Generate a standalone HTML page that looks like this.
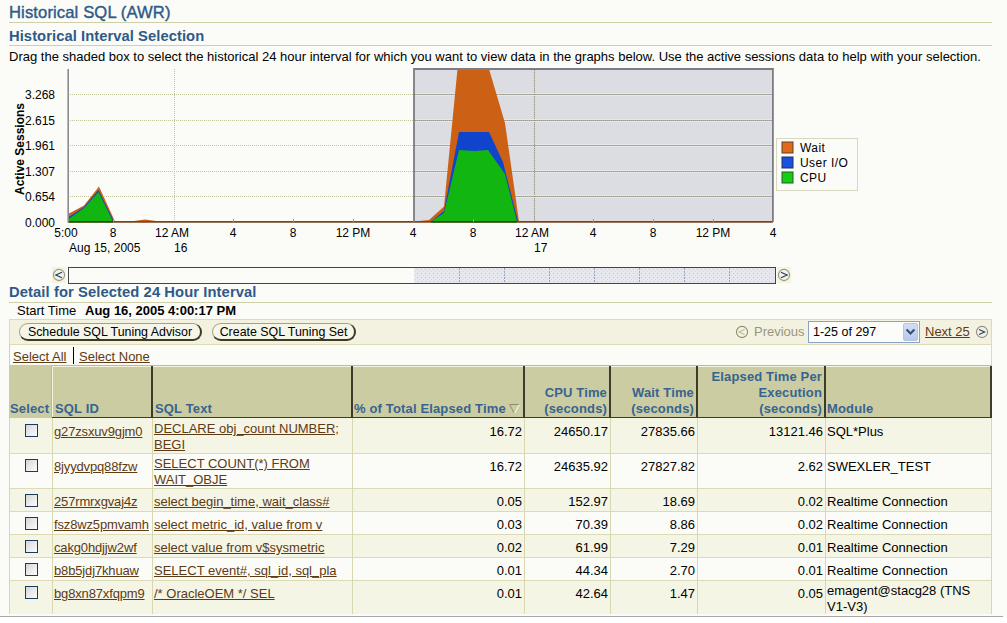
<!DOCTYPE html>
<html><head><meta charset="utf-8">
<style>
html,body{margin:0;padding:0;}
body{width:1007px;height:623px;overflow:hidden;background:#fbfcf7;font-family:"Liberation Sans",sans-serif;color:#000;position:relative;}
.t{position:absolute;white-space:nowrap;line-height:20px;}
.r{position:absolute;}
.lnk{text-decoration:underline;text-underline-offset:1px;}
.btn{position:absolute;height:18px;box-sizing:border-box;padding-top:1px;border:1px solid #a3a285;border-right:2px solid #3c3b22;border-bottom:2px solid #3c3b22;border-radius:9px;background:#f6f6e8;font-size:12.4px;line-height:15px;text-align:center;white-space:nowrap;color:#000;}
.cb{position:absolute;width:13px;height:13px;box-sizing:border-box;border:1px solid #1c3a5a;background:linear-gradient(135deg,#d4d4d8 0%,#e8e8ea 45%,#fbfbfb 100%);}
</style></head>
<body>
<div class="t" style="top:3px;font-size:16.6px;color:#2e5a88;left:9px;-webkit-text-stroke:0.4px #2e5a88;letter-spacing:0.12px;">Historical SQL (AWR)</div>
<div class="r" style="left:9px;top:22px;width:983px;height:1px;background:#cfcfa8;"></div>
<div class="t" style="top:26px;font-size:14.75px;font-weight:bold;color:#2e5a88;left:9px;letter-spacing:0.06px;">Historical Interval Selection</div>
<div class="r" style="left:9px;top:45px;width:983px;height:1px;background:#cfcfa8;"></div>
<div class="t" style="top:47px;font-size:13px;left:9px;">Drag the shaded box to select the historical 24 hour interval for which you want to view data in the graphs below. Use the active sessions data to help with your selection.</div>
<svg class="r" style="left:0;top:0" width="1007" height="292" viewBox="0 0 1007 292" font-family="Liberation Sans" font-size="12">
  <defs>
    <pattern id="thumb" x="0" y="0" width="4" height="4" patternUnits="userSpaceOnUse">
      <rect width="4" height="4" fill="#e6e8ee"/>
      <rect x="1" y="1" width="1" height="1" fill="#c9ccd4"/>
      <rect x="3" y="3" width="1" height="1" fill="#d6d8de"/>
    </pattern>
  </defs>
  <!-- selection shade -->
  <rect x="414" y="69" width="359" height="152" fill="#dcdce3"/>
  <!-- grid -->
  <g stroke="#c4c49c" stroke-width="1" stroke-dasharray="1,1">
    <line x1="68" y1="94.5" x2="773" y2="94.5"/>
    <line x1="68" y1="120.5" x2="773" y2="120.5"/>
    <line x1="68" y1="145.5" x2="773" y2="145.5"/>
    <line x1="68" y1="171.5" x2="773" y2="171.5"/>
    <line x1="68" y1="196.5" x2="773" y2="196.5"/>
    <line x1="174.5" y1="69" x2="174.5" y2="221"/>
    <line x1="534.5" y1="69" x2="534.5" y2="221"/>
  </g>
  <g>
    <rect x="415" y="93" width="357" height="3" fill="#e5e7ea"/>
    <rect x="415" y="119" width="357" height="3" fill="#e5e7ea"/>
    <rect x="415" y="144" width="357" height="3" fill="#e5e7ea"/>
    <rect x="415" y="170" width="357" height="3" fill="#e5e7ea"/>
    <rect x="415" y="195" width="357" height="3" fill="#e5e7ea"/>
  </g>
  <g stroke="#b4b4a6" stroke-width="1">
    <line x1="415" y1="94.5" x2="772" y2="94.5"/>
    <line x1="415" y1="120.5" x2="772" y2="120.5"/>
    <line x1="415" y1="145.5" x2="772" y2="145.5"/>
    <line x1="415" y1="171.5" x2="772" y2="171.5"/>
    <line x1="415" y1="196.5" x2="772" y2="196.5"/>
  </g>
  <g stroke="#9a9a88" stroke-width="1" stroke-dasharray="1,1">
    <line x1="415" y1="94.5" x2="772" y2="94.5"/>
    <line x1="415" y1="120.5" x2="772" y2="120.5"/>
    <line x1="415" y1="145.5" x2="772" y2="145.5"/>
    <line x1="415" y1="171.5" x2="772" y2="171.5"/>
    <line x1="415" y1="196.5" x2="772" y2="196.5"/>
    <line x1="534.5" y1="70" x2="534.5" y2="221"/>
  </g>
  <!-- data -->
  <polygon fill="#cc6116" points="68,221.5 68,214 84,205.5 99,186.5 115,221.5 130,221.5 145,219.5 160,221.5 414,221.5 429,220 444,206.5 457.5,69 489,69 505,123 519,221.5"/>
  <polygon fill="#1144cc" points="68,221.5 68,217.5 84,207 98.5,190 114,221.5 414,221.5 431,221.5 444,211 459,132 489,132 503,162 518,221.5"/>
  <polygon fill="#11b611" points="68,221.5 68,219.5 84,208 98.5,192 113,221.5 414,221.5 431,221.5 444,213 459,150 475,151 488,150 505,174 517,221.5"/>
  <line x1="68" y1="221.8" x2="773" y2="221.8" stroke="#7a4420" stroke-width="1.7"/>
  <line x1="431" y1="221.8" x2="517" y2="221.8" stroke="#0a5a0a" stroke-width="1.6"/>
  <line x1="68" y1="221.8" x2="113" y2="221.8" stroke="#0a5a0a" stroke-width="1.6"/>
  <!-- ticks -->
  <g stroke="#9a9a90" stroke-width="1">
    <line x1="233.5" y1="219" x2="233.5" y2="222"/>
    <line x1="293.5" y1="219" x2="293.5" y2="222"/>
    <line x1="353.5" y1="219" x2="353.5" y2="222"/>
    <line x1="113.5" y1="219" x2="113.5" y2="222"/>
    <line x1="473.5" y1="219" x2="473.5" y2="222"/>
    <line x1="593.5" y1="219" x2="593.5" y2="222"/>
    <line x1="653.5" y1="219" x2="653.5" y2="222"/>
    <line x1="713.5" y1="219" x2="713.5" y2="222"/>
  </g>
  <!-- selection border -->
  <path d="M414,222 V69 H772.9 V222" fill="none" stroke="#7c7c82" stroke-width="1.8"/>
  <!-- axes -->
  <line x1="68.2" y1="69" x2="68.2" y2="222.5" stroke="#8a8a90" stroke-width="1.6"/>
  <!-- y labels -->
  <g text-anchor="end" fill="#000">
    <text x="55" y="99">3.268</text>
    <text x="55" y="125">2.615</text>
    <text x="55" y="150">1.961</text>
    <text x="55" y="176">1.307</text>
    <text x="55" y="201">0.654</text>
    <text x="55" y="227">0.000</text>
  </g>
  <text transform="translate(24,149) rotate(-90)" text-anchor="middle" font-weight="bold">Active Sessions</text>
  <!-- x labels -->
  <g text-anchor="middle">
    <text x="66" y="237">5:00</text>
    <text x="113" y="237">8</text>
    <text x="172" y="237">12 AM</text>
    <text x="233" y="237">4</text>
    <text x="293" y="237">8</text>
    <text x="353" y="237">12 PM</text>
    <text x="413" y="237">4</text>
    <text x="473" y="237">8</text>
    <text x="532" y="237">12 AM</text>
    <text x="593" y="237">4</text>
    <text x="653" y="237">8</text>
    <text x="713" y="237">12 PM</text>
    <text x="773" y="237">4</text>
  </g>
  <text x="69" y="252">Aug 15, 2005</text>
  <text x="174" y="252">16</text>
  <text x="534" y="252">17</text>
  <!-- legend -->
  <rect x="776.5" y="138.5" width="81" height="52" fill="#fbfcf7" stroke="#d8d8c0"/>
  <rect x="782" y="142" width="11" height="11" fill="#e06a1a" stroke="#604030"/>
  <rect x="782" y="157" width="11" height="11" fill="#1a4fe0" stroke="#203060"/>
  <rect x="782" y="172" width="11" height="11" fill="#17cc17" stroke="#206020"/>
  <g letter-spacing="0.45">
  <text x="800" y="152">Wait</text>
  <text x="800" y="167">User I/O</text>
  <text x="800" y="182">CPU</text>
  </g>
  <!-- scrollbar -->
  <rect x="52" y="267" width="14" height="16" fill="#f3f2e4"/>
  <circle cx="59" cy="275" r="5.6" fill="none" stroke="#9d9a7e" stroke-width="1.1"/>
  <path d="M62,272.3 L55.8,275 L62,277.7" fill="none" stroke="#1f3f6a" stroke-width="1.1"/>
  <rect x="68.5" y="267.5" width="707" height="16" fill="#fbfcf7" stroke="#444"/>
  <rect x="414" y="268" width="361" height="15" fill="url(#thumb)"/>
  <g stroke="#9aa6c0" stroke-width="1" stroke-dasharray="2,1">
    <line x1="459.5" y1="268" x2="459.5" y2="283"/>
    <line x1="504.5" y1="268" x2="504.5" y2="283"/>
    <line x1="549.5" y1="268" x2="549.5" y2="283"/>
    <line x1="594.5" y1="268" x2="594.5" y2="283"/>
    <line x1="639.5" y1="268" x2="639.5" y2="283"/>
    <line x1="684.5" y1="268" x2="684.5" y2="283"/>
    <line x1="729.5" y1="268" x2="729.5" y2="283"/>
  </g>
  <rect x="777" y="267" width="14" height="16" fill="#f3f2e4"/>
  <circle cx="784" cy="275" r="5.6" fill="none" stroke="#9d9a7e" stroke-width="1.1"/>
  <path d="M781,272.3 L787.2,275 L781,277.7" fill="none" stroke="#1f3f6a" stroke-width="1.1"/>
</svg>

<div class="t" style="top:282px;font-size:14.75px;font-weight:bold;color:#2e5a88;left:9px;letter-spacing:0.09px;">Detail for Selected 24 Hour Interval</div>
<div class="r" style="left:9px;top:302px;width:983px;height:1px;background:#cfcfa8;"></div>
<div class="t" style="top:301px;font-size:13px;left:17px;">Start Time</div>
<div class="t" style="top:301px;font-size:13px;font-weight:bold;left:85px;">Aug 16, 2005 4:00:17 PM</div>
<div class="r" style="left:9px;top:319px;width:983px;height:26px;background:#f3f2e1;box-sizing:border-box;border:1px solid #dcdab8;"></div>
<div class="btn" style="left:19px;top:323px;width:183px;">Schedule SQL Tuning Advisor</div>
<div class="btn" style="left:212px;top:323px;width:144px;">Create SQL Tuning Set</div>
<svg class="r" style="left:735px;top:325px" width="14" height="14"><circle cx="7" cy="7" r="5.6" fill="none" stroke="#8e8d70" stroke-width="1.1"/><path d="M9.5,4.6 L4,7 L9.5,9.4" fill="none" stroke="#bcbb90" stroke-width="1.1"/></svg>
<div class="t" style="left:754px;top:322px;font-size:13px;color:#98967c;">Previous</div>
<div class="r" style="left:808px;top:321px;width:112px;height:22px;box-sizing:border-box;border:1px solid #8aa3c4;background:#fcfdfa;"></div>
<div class="t" style="left:813px;top:322px;font-size:12.5px;color:#000;">1-25 of 297</div>
<div class="r" style="left:903px;top:323px;width:15px;height:18px;box-sizing:border-box;border:1px solid #b5c5e2;border-radius:2px;background:linear-gradient(180deg,#d3def3,#b8c9ea);"></div>
<svg class="r" style="left:903px;top:323px" width="15" height="18"><path d="M3.6,6.6 L7.5,10.6 L11.4,6.6" fill="none" stroke="#34507a" stroke-width="2.1"/></svg>
<div class="t" style="left:925px;top:322px;font-size:13px;color:#5e3b14;"><span class="lnk">Next 25</span></div>
<svg class="r" style="left:975px;top:325px" width="14" height="14"><circle cx="7" cy="7" r="5.6" fill="none" stroke="#8f9284" stroke-width="1.1"/><path d="M4,4.6 L9.6,7 L4,9.4" fill="none" stroke="#1f3f6a" stroke-width="1.1"/></svg>

<div class="r" style="left:9px;top:345px;width:983px;height:20px;background:#fbfcf7;box-sizing:border-box;border-left:1px solid #d4d3ad;border-right:1px solid #d8d8d0;"></div>
<div class="t" style="top:347px;font-size:13px;color:#5e3b14;left:13px;"><span class="lnk">Select All</span></div>
<div class="r" style="left:73px;top:347px;width:1px;height:17px;background:#000;"></div>
<div class="t" style="top:347px;font-size:13px;color:#5e3b14;left:79px;"><span class="lnk">Select None</span></div>
<div class="r" style="left:9px;top:365px;width:983px;height:53px;background:#cccca3;"></div>
<div class="r" style="left:51px;top:365px;width:101px;height:1px;background:#b9b9a8;"></div>
<div class="r" style="left:51px;top:365px;width:1px;height:53px;background:#b9b9a8;"></div>
<div class="r" style="left:52px;top:366px;width:100px;height:1px;background:#f4f3dc;"></div>
<div class="r" style="left:52px;top:366px;width:1px;height:52px;background:#f4f3dc;"></div>
<div class="r" style="left:151px;top:365px;width:201px;height:1px;background:#b9b9a8;"></div>
<div class="r" style="left:151px;top:365px;width:1px;height:53px;background:#b9b9a8;"></div>
<div class="r" style="left:152px;top:366px;width:200px;height:1px;background:#f4f3dc;"></div>
<div class="r" style="left:152px;top:366px;width:1px;height:52px;background:#f4f3dc;"></div>
<div class="r" style="left:351px;top:365px;width:173px;height:1px;background:#b9b9a8;"></div>
<div class="r" style="left:351px;top:365px;width:1px;height:53px;background:#b9b9a8;"></div>
<div class="r" style="left:352px;top:366px;width:172px;height:1px;background:#f4f3dc;"></div>
<div class="r" style="left:352px;top:366px;width:1px;height:52px;background:#f4f3dc;"></div>
<div class="r" style="left:523px;top:365px;width:87px;height:1px;background:#b9b9a8;"></div>
<div class="r" style="left:523px;top:365px;width:1px;height:53px;background:#b9b9a8;"></div>
<div class="r" style="left:524px;top:366px;width:86px;height:1px;background:#f4f3dc;"></div>
<div class="r" style="left:524px;top:366px;width:1px;height:52px;background:#f4f3dc;"></div>
<div class="r" style="left:609px;top:365px;width:88px;height:1px;background:#b9b9a8;"></div>
<div class="r" style="left:609px;top:365px;width:1px;height:53px;background:#b9b9a8;"></div>
<div class="r" style="left:610px;top:366px;width:87px;height:1px;background:#f4f3dc;"></div>
<div class="r" style="left:610px;top:366px;width:1px;height:52px;background:#f4f3dc;"></div>
<div class="r" style="left:696px;top:365px;width:129px;height:1px;background:#b9b9a8;"></div>
<div class="r" style="left:696px;top:365px;width:1px;height:53px;background:#b9b9a8;"></div>
<div class="r" style="left:697px;top:366px;width:128px;height:1px;background:#f4f3dc;"></div>
<div class="r" style="left:697px;top:366px;width:1px;height:52px;background:#f4f3dc;"></div>
<div class="r" style="left:824px;top:365px;width:167px;height:1px;background:#b9b9a8;"></div>
<div class="r" style="left:824px;top:365px;width:1px;height:53px;background:#b9b9a8;"></div>
<div class="r" style="left:825px;top:366px;width:166px;height:1px;background:#f4f3dc;"></div>
<div class="r" style="left:825px;top:366px;width:1px;height:52px;background:#f4f3dc;"></div>
<div class="r" style="left:151px;top:366px;width:2px;height:52px;background:#3d3b2a;"></div>
<div class="r" style="left:52px;top:417px;width:101px;height:1px;background:#3d3b2a;"></div>
<div class="r" style="left:351px;top:366px;width:2px;height:52px;background:#3d3b2a;"></div>
<div class="r" style="left:152px;top:417px;width:201px;height:1px;background:#3d3b2a;"></div>
<div class="r" style="left:523px;top:366px;width:2px;height:52px;background:#3d3b2a;"></div>
<div class="r" style="left:352px;top:417px;width:173px;height:1px;background:#3d3b2a;"></div>
<div class="r" style="left:609px;top:366px;width:2px;height:52px;background:#3d3b2a;"></div>
<div class="r" style="left:524px;top:417px;width:87px;height:1px;background:#3d3b2a;"></div>
<div class="r" style="left:696px;top:366px;width:2px;height:52px;background:#3d3b2a;"></div>
<div class="r" style="left:610px;top:417px;width:88px;height:1px;background:#3d3b2a;"></div>
<div class="r" style="left:824px;top:366px;width:2px;height:52px;background:#3d3b2a;"></div>
<div class="r" style="left:697px;top:417px;width:129px;height:1px;background:#3d3b2a;"></div>
<div class="r" style="left:990px;top:366px;width:2px;height:52px;background:#3d3b2a;"></div>
<div class="r" style="left:825px;top:417px;width:167px;height:1px;background:#3d3b2a;"></div>
<div class="t" style="top:399px;font-size:13px;font-weight:bold;color:#37648f;left:10px;letter-spacing:0.15px;">Select</div>
<div class="t" style="top:399px;font-size:13px;font-weight:bold;color:#37648f;left:55px;letter-spacing:0.15px;">SQL ID</div>
<div class="t" style="top:399px;font-size:13px;font-weight:bold;color:#37648f;left:155px;letter-spacing:0.15px;">SQL Text</div>
<div class="t" style="top:399px;font-size:13px;font-weight:bold;color:#37648f;left:354px;letter-spacing:0.15px;">% of Total Elapsed Time</div>
<svg class="r" style="left:508px;top:403px" width="13" height="12"><path d="M1.5,1.5 H11.5 L6.5,10.5 Z" fill="none" stroke="#8d8c6c" stroke-width="1"/><path d="M11.5,1.5 L6.5,10.5" stroke="#fbfbef" stroke-width="1.2"/></svg>
<div class="t" style="top:383px;font-size:13px;font-weight:bold;color:#37648f;right:400px;text-align:right;letter-spacing:0.15px;">CPU Time</div>
<div class="t" style="top:399px;font-size:13px;font-weight:bold;color:#37648f;right:400px;text-align:right;letter-spacing:0.15px;">(seconds)</div>
<div class="t" style="top:383px;font-size:13px;font-weight:bold;color:#37648f;right:313px;text-align:right;letter-spacing:0.15px;">Wait Time</div>
<div class="t" style="top:399px;font-size:13px;font-weight:bold;color:#37648f;right:313px;text-align:right;letter-spacing:0.15px;">(seconds)</div>
<div class="t" style="top:367px;font-size:13px;font-weight:bold;color:#37648f;right:185px;text-align:right;letter-spacing:0.15px;">Elapsed Time Per</div>
<div class="t" style="top:383px;font-size:13px;font-weight:bold;color:#37648f;right:185px;text-align:right;letter-spacing:0.15px;">Execution</div>
<div class="t" style="top:399px;font-size:13px;font-weight:bold;color:#37648f;right:185px;text-align:right;letter-spacing:0.15px;">(seconds)</div>
<div class="t" style="top:399px;font-size:13px;font-weight:bold;color:#37648f;left:827px;letter-spacing:0.15px;">Module</div>
<div class="r" style="left:9px;top:418px;width:983px;height:35px;background:#f5f5e5;"></div>
<div class="cb" style="left:25px;top:424px"></div>
<div class="t" style="top:422px;font-size:13px;color:#5e3b14;left:54px;letter-spacing:-0.15px;"><span class="lnk">g27zsxuv9gjm0</span></div>
<div class="t" style="top:419px;font-size:13px;color:#5e3b14;left:154px;"><span class="lnk">DECLARE obj_count NUMBER;</span></div>
<div class="t" style="top:435px;font-size:13px;color:#5e3b14;left:154px;"><span class="lnk">BEGI</span></div>
<div class="t" style="top:422px;font-size:13px;right:485px;text-align:right;">16.72</div>
<div class="t" style="top:422px;font-size:13px;right:399px;text-align:right;">24650.17</div>
<div class="t" style="top:422px;font-size:13px;right:312px;text-align:right;">27835.66</div>
<div class="t" style="top:422px;font-size:13px;right:184px;text-align:right;">13121.46</div>
<div class="t" style="top:422px;font-size:13px;left:827px;">SQL*Plus</div>
<div class="r" style="left:9px;top:453px;width:983px;height:35px;background:#fbfcf7;"></div>
<div class="cb" style="left:25px;top:459px"></div>
<div class="t" style="top:457px;font-size:13px;color:#5e3b14;left:54px;letter-spacing:-0.15px;"><span class="lnk">8jyydvpq88fzw</span></div>
<div class="t" style="top:454px;font-size:13px;color:#5e3b14;left:154px;"><span class="lnk">SELECT COUNT(*) FROM</span></div>
<div class="t" style="top:470px;font-size:13px;color:#5e3b14;left:154px;"><span class="lnk">WAIT_OBJE</span></div>
<div class="t" style="top:457px;font-size:13px;right:485px;text-align:right;">16.72</div>
<div class="t" style="top:457px;font-size:13px;right:399px;text-align:right;">24635.92</div>
<div class="t" style="top:457px;font-size:13px;right:312px;text-align:right;">27827.82</div>
<div class="t" style="top:457px;font-size:13px;right:184px;text-align:right;">2.62</div>
<div class="t" style="top:457px;font-size:13px;left:827px;">SWEXLER_TEST</div>
<div class="r" style="left:9px;top:488px;width:983px;height:23px;background:#f5f5e5;"></div>
<div class="cb" style="left:25px;top:494px"></div>
<div class="t" style="top:492px;font-size:13px;color:#5e3b14;left:54px;letter-spacing:-0.15px;"><span class="lnk">257rmrxgvaj4z</span></div>
<div class="t" style="top:492px;font-size:13px;color:#5e3b14;left:154px;"><span class="lnk">select begin_time, wait_class#</span></div>
<div class="t" style="top:492px;font-size:13px;right:485px;text-align:right;">0.05</div>
<div class="t" style="top:492px;font-size:13px;right:399px;text-align:right;">152.97</div>
<div class="t" style="top:492px;font-size:13px;right:312px;text-align:right;">18.69</div>
<div class="t" style="top:492px;font-size:13px;right:184px;text-align:right;">0.02</div>
<div class="t" style="top:492px;font-size:13px;left:827px;">Realtime Connection</div>
<div class="r" style="left:9px;top:511px;width:983px;height:23px;background:#fbfcf7;"></div>
<div class="cb" style="left:25px;top:517px"></div>
<div class="t" style="top:515px;font-size:13px;color:#5e3b14;left:54px;letter-spacing:-0.15px;"><span class="lnk">fsz8wz5pmvamh</span></div>
<div class="t" style="top:515px;font-size:13px;color:#5e3b14;left:154px;"><span class="lnk">select metric_id, value from v</span></div>
<div class="t" style="top:515px;font-size:13px;right:485px;text-align:right;">0.03</div>
<div class="t" style="top:515px;font-size:13px;right:399px;text-align:right;">70.39</div>
<div class="t" style="top:515px;font-size:13px;right:312px;text-align:right;">8.86</div>
<div class="t" style="top:515px;font-size:13px;right:184px;text-align:right;">0.02</div>
<div class="t" style="top:515px;font-size:13px;left:827px;">Realtime Connection</div>
<div class="r" style="left:9px;top:534px;width:983px;height:23px;background:#f5f5e5;"></div>
<div class="cb" style="left:25px;top:540px"></div>
<div class="t" style="top:538px;font-size:13px;color:#5e3b14;left:54px;letter-spacing:-0.15px;"><span class="lnk">cakg0hdjjw2wf</span></div>
<div class="t" style="top:538px;font-size:13px;color:#5e3b14;left:154px;"><span class="lnk">select value from v$sysmetric</span></div>
<div class="t" style="top:538px;font-size:13px;right:485px;text-align:right;">0.02</div>
<div class="t" style="top:538px;font-size:13px;right:399px;text-align:right;">61.99</div>
<div class="t" style="top:538px;font-size:13px;right:312px;text-align:right;">7.29</div>
<div class="t" style="top:538px;font-size:13px;right:184px;text-align:right;">0.01</div>
<div class="t" style="top:538px;font-size:13px;left:827px;">Realtime Connection</div>
<div class="r" style="left:9px;top:557px;width:983px;height:23px;background:#fbfcf7;"></div>
<div class="cb" style="left:25px;top:563px"></div>
<div class="t" style="top:561px;font-size:13px;color:#5e3b14;left:54px;letter-spacing:-0.15px;"><span class="lnk">b8b5jdj7khuaw</span></div>
<div class="t" style="top:561px;font-size:13px;color:#5e3b14;left:154px;"><span class="lnk">SELECT event#, sql_id, sql_pla</span></div>
<div class="t" style="top:561px;font-size:13px;right:485px;text-align:right;">0.01</div>
<div class="t" style="top:561px;font-size:13px;right:399px;text-align:right;">44.34</div>
<div class="t" style="top:561px;font-size:13px;right:312px;text-align:right;">2.70</div>
<div class="t" style="top:561px;font-size:13px;right:184px;text-align:right;">0.01</div>
<div class="t" style="top:561px;font-size:13px;left:827px;">Realtime Connection</div>
<div class="r" style="left:9px;top:580px;width:983px;height:34px;background:#f5f5e5;"></div>
<div class="cb" style="left:25px;top:586px"></div>
<div class="t" style="top:584px;font-size:13px;color:#5e3b14;left:54px;letter-spacing:-0.15px;"><span class="lnk">bg8xn87xfqpm9</span></div>
<div class="t" style="top:584px;font-size:13px;color:#5e3b14;left:154px;"><span class="lnk">/* OracleOEM */ SEL</span></div>
<div class="t" style="top:584px;font-size:13px;right:485px;text-align:right;">0.01</div>
<div class="t" style="top:584px;font-size:13px;right:399px;text-align:right;">42.64</div>
<div class="t" style="top:584px;font-size:13px;right:312px;text-align:right;">1.47</div>
<div class="t" style="top:584px;font-size:13px;right:184px;text-align:right;">0.05</div>
<div class="t" style="top:581px;font-size:13px;left:827px;">emagent@stacg28 (TNS</div>
<div class="t" style="top:597px;font-size:13px;left:827px;">V1-V3)</div>
<div class="r" style="left:9px;top:453px;width:983px;height:1px;background:#dcdbb6;"></div>
<div class="r" style="left:9px;top:488px;width:983px;height:1px;background:#dcdbb6;"></div>
<div class="r" style="left:9px;top:511px;width:983px;height:1px;background:#dcdbb6;"></div>
<div class="r" style="left:9px;top:534px;width:983px;height:1px;background:#dcdbb6;"></div>
<div class="r" style="left:9px;top:557px;width:983px;height:1px;background:#dcdbb6;"></div>
<div class="r" style="left:9px;top:580px;width:983px;height:1px;background:#dcdbb6;"></div>
<div class="r" style="left:9px;top:418px;width:1px;height:196px;background:#d8d7b0;"></div>
<div class="r" style="left:52px;top:418px;width:1px;height:196px;background:#d8d7b0;"></div>
<div class="r" style="left:152px;top:418px;width:1px;height:196px;background:#d8d7b0;"></div>
<div class="r" style="left:352px;top:418px;width:1px;height:196px;background:#d8d7b0;"></div>
<div class="r" style="left:524px;top:418px;width:1px;height:196px;background:#d8d7b0;"></div>
<div class="r" style="left:610px;top:418px;width:1px;height:196px;background:#d8d7b0;"></div>
<div class="r" style="left:697px;top:418px;width:1px;height:196px;background:#d8d7b0;"></div>
<div class="r" style="left:825px;top:418px;width:1px;height:196px;background:#d8d7b0;"></div>
<div class="r" style="left:991px;top:418px;width:1px;height:196px;background:#d8d7b0;"></div>
<div class="r" style="left:0px;top:614px;width:1007px;height:9px;background:#fbfcf7;"></div>
<div class="r" style="left:0px;top:616px;width:1003px;height:1px;background:#a8a8a8;"></div>
<div class="r" style="left:0px;top:617px;width:1007px;height:6px;background:#ffffff;"></div>
</body></html>
